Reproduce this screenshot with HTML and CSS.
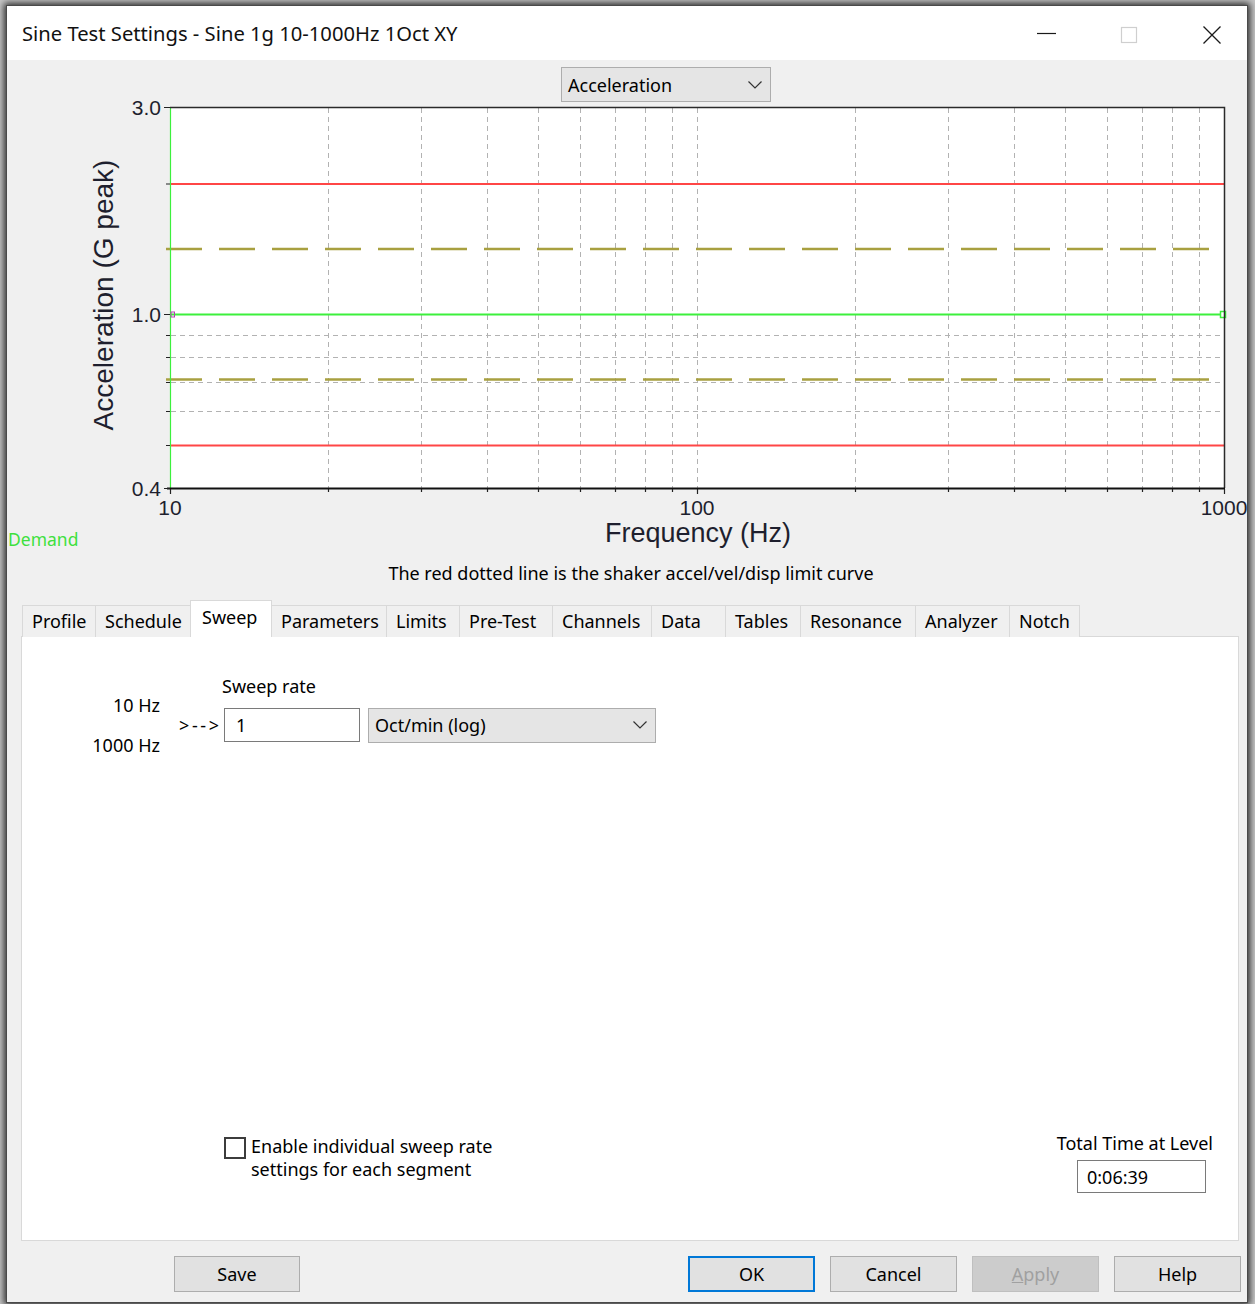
FILE: index.html
```html
<!DOCTYPE html>
<html lang="en">
<head>
<meta charset="utf-8">
<title>Sine Test Settings</title>
<link rel="stylesheet" href="styles.css">
</head>
<body>
<div class="window">
  <header class="titlebar">
    <span class="title">Sine Test Settings - Sine 1g 10-1000Hz 1Oct XY</span>
    <div class="caption-buttons">
      <span class="cb"><svg width="20" height="20" viewBox="0 0 20 20"><path d="M0 7.5H19" stroke="#1a1a1a" stroke-width="1.2"/></svg></span>
      <span class="cb"><svg width="20" height="20" viewBox="0 0 20 20"><rect x="1.5" y="1.5" width="15" height="15" fill="none" stroke="#cfcfcf" stroke-width="1.2"/></svg></span>
      <span class="cb"><svg width="20" height="20" viewBox="0 0 20 20"><path d="M0.5 0.5L17.5 17.5M17.5 0.5L0.5 17.5" stroke="#1a1a1a" stroke-width="1.3"/></svg></span>
    </div>
  </header>

  <main class="client">
    <section class="chart">
      <div class="combo unit-select">
        <span>Acceleration</span>
        <svg class="chev" width="14" height="8" viewBox="0 0 14 8"><path d="M0.5 0.5L7 7L13.5 0.5" fill="none" stroke="#333" stroke-width="1.2"/></svg>
      </div>
      <svg class="plot" viewBox="7 60 1240 500" width="1240" height="500">
        <rect x="170" y="107" width="1054" height="381" fill="#fff"/>
        <!-- log grid: 20..90 Hz, 200..900 Hz; 0.5..0.9 g and 2 g -->
        <path stroke="#b2b2b2" stroke-width="1" stroke-dasharray="5 4" fill="none"
          d="M328.5 108V488M421.5 108V488M487.5 108V488M538.5 108V488M580.5 108V488M615.5 108V488M645.5 108V488M672.5 108V488M697.5 108V488M855.5 108V488M948.5 108V488M1014.5 108V488M1065.5 108V488M1107.5 108V488M1142.5 108V488M1172.5 108V488M1199.5 108V488M171 335.5H1224M171 357.5H1224M171 382.5H1224M171 411.5H1224"/>
        <!-- abort limits -->
        <path d="M171 184H1224M171 445.5H1224" stroke="#ff4646" stroke-width="2" fill="none"/>
        <!-- alarm limits -->
        <path d="M166 249H1224M166 379.5H1224" stroke="#a8a040" stroke-width="2.5" stroke-dasharray="36 17" fill="none"/>
        <!-- demand -->
        <path d="M171 314.5H1221" stroke="#3cf03c" stroke-width="2" fill="none"/>
        <path d="M170.5 107V488" stroke="#3cf03c" stroke-width="1.2" fill="none"/>
        <rect x="171" y="312" width="3.5" height="5" fill="none" stroke="#b040b0" stroke-width="1"/>
        <rect x="1220.5" y="311.5" width="5" height="6" fill="#fff" stroke="#3cf03c" stroke-width="1.5"/>
        <!-- frame -->
        <path d="M170 107.5H1224.5V488" stroke="#2a2a2a" stroke-width="1.5" fill="none"/>
        <path d="M167 488.5H1225" stroke="#111" stroke-width="2" fill="none"/>
        <!-- ticks -->
        <path stroke="#222" stroke-width="1.2" fill="none"
          d="M328.5 489v3M421.5 489v3M487.5 489v3M538.5 489v3M580.5 489v3M615.5 489v3M645.5 489v3M672.5 489v3M855.5 489v3M948.5 489v3M1014.5 489v3M1065.5 489v3M1107.5 489v3M1142.5 489v3M1172.5 489v3M1199.5 489v3M170.5 489v5M697.5 489v5M1224.5 489v5M166 335.5h4M166 357.5h4M166 382.5h4M166 411.5h4M166 445.5h4M166 184h4M164 107.5h6M164 314.5h6M164 488.5h6"/>
        <g class="axis-text">
          <text x="161" y="115" text-anchor="end">3.0</text>
          <text x="161" y="322" text-anchor="end">1.0</text>
          <text x="161" y="496" text-anchor="end">0.4</text>
          <text x="170" y="515" text-anchor="middle">10</text>
          <text x="697" y="515" text-anchor="middle">100</text>
          <text x="1224" y="515" text-anchor="middle">1000</text>
        </g>
        <text class="axis-title" x="698" y="542" text-anchor="middle">Frequency (Hz)</text>
        <text class="axis-title axis-title-y" transform="translate(113 295) rotate(-90)" text-anchor="middle">Acceleration (G peak)</text>
        <text class="legend" x="8" y="546">Demand</text>
      </svg>
    </section>

    <p class="limit-note">The red dotted line is the shaker accel/vel/disp limit curve</p>

    <nav class="tabs">
      <span class="tab">Profile</span>
      <span class="tab">Schedule</span>
      <span class="tab active">Sweep</span>
      <span class="tab">Parameters</span>
      <span class="tab">Limits</span>
      <span class="tab">Pre-Test</span>
      <span class="tab">Channels</span>
      <span class="tab">Data</span>
      <span class="tab">Tables</span>
      <span class="tab">Resonance</span>
      <span class="tab">Analyzer</span>
      <span class="tab">Notch</span>
    </nav>

    <section class="panel">
      <div class="rate-label">Sweep rate</div>
      <div class="rate-row">
        <div class="freqs">
          <span>10 Hz</span>
          <span>1000 Hz</span>
        </div>
        <span class="arrow">&gt;--&gt;</span>
        <input class="field rate-field" type="text" value="1">
        <div class="combo rate-unit">
          <span>Oct/min (log)</span>
          <svg class="chev" width="14" height="8" viewBox="0 0 14 8"><path d="M0.5 0.5L7 7L13.5 0.5" fill="none" stroke="#333" stroke-width="1.2"/></svg>
        </div>
      </div>

      <div class="panel-bottom">
        <label class="seg-option">
          <span class="checkbox"></span>
          <span class="seg-text">Enable individual sweep rate<br>settings for each segment</span>
        </label>
        <div class="total">
          <span class="total-label">Total Time at Level</span>
          <input class="field total-field" type="text" value="0:06:39">
        </div>
      </div>
    </section>

    <footer class="buttons">
      <button class="btn btn-save">Save</button>
      <button class="btn btn-default">OK</button>
      <button class="btn">Cancel</button>
      <button class="btn" disabled><u>A</u>pply</button>
      <button class="btn">Help</button>
    </footer>
  </main>
</div>
</body>
</html>
```

FILE: styles.css
```css
html,
body {
  margin: 0;
  height: 100%;
  overflow: hidden;
}

body {
  box-sizing: border-box;
  padding: 6px 8px 2px 7px;
  background: #c8c8c8;
  font-family: "Noto Sans", "Open Sans", sans-serif;
  font-size: 18px;
  color: #000;
}

.window {
  width: 1240px;
  height: 1296px;
  background: #f0f0f0;
  display: flex;
  flex-direction: column;
  box-shadow: 0 0 0 1px #4a4a4a, 0 0 7px 3px rgba(0, 0, 0, 0.8);
}

/* title bar */
.titlebar {
  flex: none;
  height: 54px;
  background: #fff;
  display: flex;
  align-items: center;
}

.title {
  padding-left: 15px;
  font-size: 20.2px;
  color: #111;
}

.caption-buttons {
  margin-left: auto;
  display: flex;
  gap: 63px;
  padding-right: 24px;
  margin-top: 5px;
}

.cb {
  width: 20px;
  height: 20px;
  display: flex;
}

/* client area */
.client {
  flex: 1;
  display: flex;
  flex-direction: column;
}

.chart {
  flex: none;
  position: relative;
  height: 500px;
}

.plot {
  display: block;
}

.axis-text {
  font-family: "Liberation Sans", Arial, sans-serif;
  font-size: 21px;
  fill: #1e1f2e;
}

.axis-title {
  font-family: "Liberation Sans", Arial, sans-serif;
  font-size: 27px;
  fill: #1e1f2e;
}

.axis-title-y {
  font-size: 28px;
}

.legend {
  font-family: "Noto Sans", sans-serif;
  font-size: 17.5px;
  fill: #3ee03e;
}

/* combo boxes */
.combo {
  box-sizing: border-box;
  display: flex;
  align-items: center;
  justify-content: space-between;
  background: #e5e5e5;
  border: 1px solid #adadad;
  padding: 0 8px 0 6px;
}

.unit-select {
  position: absolute;
  left: 554px;
  top: 7px;
  width: 210px;
  height: 35px;
}

.chev {
  display: block;
}

.limit-note {
  margin: 0;
  height: 26px;
  line-height: 26px;
  text-align: center;
  padding-left: 8px;
}

/* tabs: one track per page, sized to its caption */
.tabs {
  position: relative;
  z-index: 1;
  display: grid;
  grid-template-columns: 73px 95px 81px 115px 73px 93px 99px 74px 75px 115px 94px 70px;
  align-items: end;
  justify-content: start;
  height: 37px;
  margin: 14px 0 0 15px;
}

.tab {
  box-sizing: border-box;
  height: 32px;
  padding: 0 0 0 9px;
  line-height: 30px;
  border: 1px solid #d9d9d9;
  border-bottom: none;
  margin-right: -1px;
  background: #f0f0f0;
  white-space: nowrap;
}

.tab.active {
  height: 37px;
  padding-left: 11px;
  line-height: 32px;
  background: #fff;
}

/* tab page */
.panel {
  box-sizing: border-box;
  height: 605px;
  margin: -1px 8px 0 14px;
  border: 1px solid #d9d9d9;
  background: #fff;
  display: flex;
  flex-direction: column;
  padding: 0 25px 47px 0;
}

.rate-label {
  margin: 39px 0 0 200px;
  line-height: 20px;
}

.rate-row {
  display: flex;
  align-items: center;
  height: 58px;
}

.freqs {
  width: 138px;
  display: flex;
  flex-direction: column;
  align-items: flex-end;
  gap: 22px;
  line-height: 18px;
}

.arrow {
  width: 45px;
  margin-left: 19px;
  letter-spacing: 2.6px;
}

.field {
  box-sizing: border-box;
  font: inherit;
  color: #000;
  background: #fff;
  border: 1px solid #7a7a7a;
  outline: none;
  margin: 0;
}

.rate-field {
  width: 136px;
  height: 34px;
  padding: 0 0 0 11px;
}

.rate-unit {
  width: 288px;
  height: 35px;
  margin-left: 8px;
}

.panel-bottom {
  margin-top: auto;
  display: flex;
  justify-content: space-between;
  align-items: flex-start;
}

.seg-option {
  display: flex;
  align-items: flex-start;
  gap: 5px;
  margin: 4px 0 0 202px;
  line-height: 23px;
}

.checkbox {
  box-sizing: border-box;
  width: 22px;
  height: 22px;
  margin-top: 2px;
  border: 2px solid #3c3c3c;
  background: #fff;
}

.total {
  display: flex;
  flex-direction: column;
  align-items: flex-end;
}

.total-label {
  line-height: 24px;
}

.total-field {
  width: 129px;
  height: 33px;
  margin: 5px 7px 0 0;
  padding: 0 0 0 9px;
}

/* dialog buttons */
.buttons {
  flex: none;
  display: flex;
  gap: 15px;
  height: 36px;
  margin-top: 15px;
  padding: 0 6px 0 167px;
}

.btn {
  box-sizing: border-box;
  width: 127px;
  height: 36px;
  font: inherit;
  color: #000;
  background: #e1e1e1;
  border: 1px solid #adadad;
  padding: 0;
}

.btn-save {
  width: 126px;
}

.btn-default {
  margin-left: auto;
  border: 2px solid #0078d7;
}

.btn:disabled {
  background: #cccccc;
  border-color: #bfbfbf;
  color: #a0a0a0;
}

.btn u {
  text-decoration-thickness: 1px;
}
```
